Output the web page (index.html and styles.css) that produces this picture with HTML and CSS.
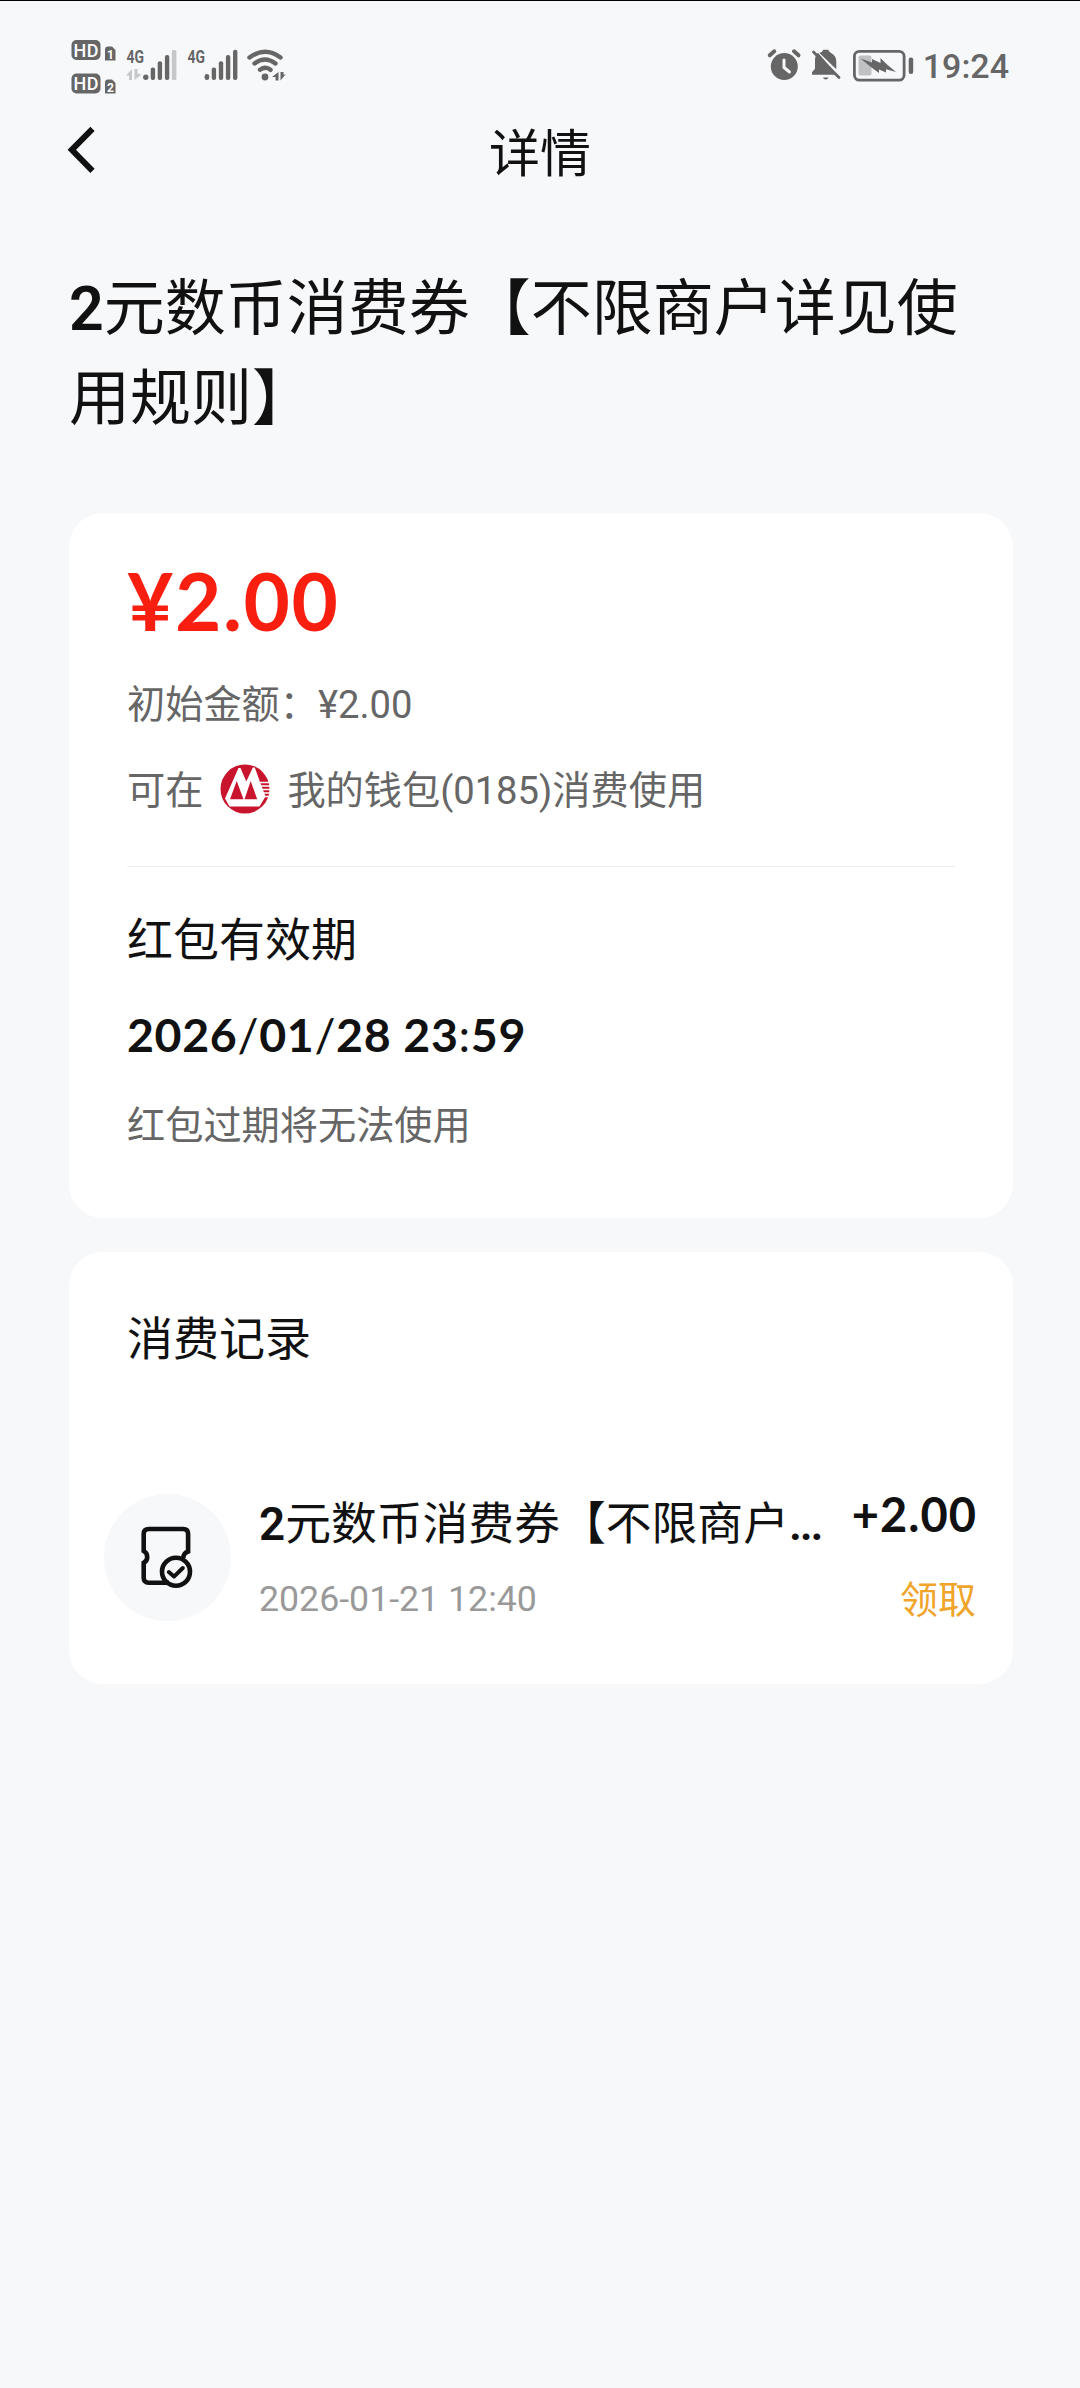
FILE: index.html
```html
<!DOCTYPE html>
<html lang="zh-CN">
<head>
<meta charset="utf-8">
<title>详情</title>
<link rel="stylesheet" href="styles.css">
</head>
<body>
<header class="status">
  <svg class="status-left" width="220" height="64" viewBox="70 34 220 64">
    <g fill="#666">
      <rect x="71.500" y="40" width="29" height="20" rx="5"/>
      <rect x="71.500" y="73.500" width="29" height="20" rx="5"/>
      <path d="M105 49.500q0-3 3-3h4l3.500 3.500v10.500h-10.500z"/>
      <path d="M105 82.500q0-3 3-3h4l3.500 3.500v10.500h-10.500z"/>
    </g>
    <g class="hd" fill="#fff">
      <text x="73.500" y="56.500" textLength="25">HD</text>
      <text x="73.500" y="90" textLength="25">HD</text>
    </g>
    <g class="sim" fill="#fff">
      <text x="107" y="58.500">1</text>
      <text x="107" y="92">2</text>
    </g>
    <g class="net" fill="#666">
      <text x="126.500" y="63" textLength="17.500" lengthAdjust="spacingAndGlyphs">4G</text>
      <text x="187.500" y="63" textLength="17.500" lengthAdjust="spacingAndGlyphs">4G</text>
    </g>
    <g fill="#c6c7c8">
      <path d="M132 69v11h-3v-4.500h-3zM134.500 69h3v4.500l4 1-7 5.500z"/>
      <rect x="171.800" y="50" width="4.600" height="30" rx="1.500"/>
    </g>
    <g fill="#666">
      <circle cx="145.800" cy="77.300" r="2.700"/>
      <rect x="150.700" y="67.500" width="4.400" height="12.500" rx="2"/>
      <rect x="157.700" y="61.300" width="4.400" height="18.700" rx="2"/>
      <rect x="164.900" y="55" width="4.400" height="25" rx="2"/>
      <rect x="204.600" y="74" width="4.600" height="6" rx="2.300"/>
      <rect x="211.700" y="67.500" width="4.400" height="12.500" rx="2"/>
      <rect x="218.800" y="61.300" width="4.400" height="18.700" rx="2"/>
      <rect x="225.900" y="55" width="4.400" height="25" rx="2"/>
      <rect x="233" y="49.800" width="4.400" height="30.200" rx="2"/>
      <circle cx="265" cy="77" r="3.400"/>
      <path d="M278.500 72v8.500h-3v-3.500h-3.500zM280.500 72h3v2.500h2l-5 6z"/>
    </g>
    <g fill="none" stroke="#666" stroke-width="4.400" stroke-linecap="round">
      <path d="M249.500 57.500q15.500-11.500 31 0M254.500 63.500q10.500-8 21 0M260 69.800q5.500-4 10.500 0"/>
    </g>
  </svg>
  <div class="status-right">
    <svg width="148" height="40" viewBox="768 44 148 40">
      <circle cx="786.300" cy="66.500" r="13.500" fill="#666"/>
      <path d="M771.800 55.300l4.500-4M800.500 55.300l-4.500-4" stroke="#666" stroke-width="4" stroke-linecap="round"/>
      <path d="M786 60v7.500l5.500 4.500" fill="none" stroke="#f7f8fa" stroke-width="3" stroke-linecap="round"/>
      <path d="M814 74.800v-2.500l3-3.500v-9q0-4.500 3-7l19 22zM821.500 53q3-1 3.800-3.200h5q.5 2 2.500 3q5.500 3 5.500 9v7.500z" fill="#666"/>
      <path d="M825 77.500h5.500q-.5 2-2.700 2t-2.800-2z" fill="#666"/>
      <path d="M815.500 52l25.500 25.500" stroke="#666" stroke-width="2.800" stroke-linecap="round"/>
      <rect x="856.400" y="51.400" width="49.700" height="28.700" rx="5" fill="none" stroke="#666" stroke-width="2.800"/>
      <rect x="860.500" y="55.500" width="13" height="20" rx="2" fill="#c0c1c2"/>
      <path d="M862.500 58.500l11.500 4v-3.500l8.500 4v-5l6.500 6.500 9 7.500-10-2.700v3.200l-7-3v3.500l-7.500-5.500z" fill="#666"/>
      <rect x="910.700" y="57.500" width="4.500" height="16.500" rx="2" fill="#666"/>
    </svg>
    <span class="time">19:24</span>
  </div>
</header>
<nav class="nav">
  <svg class="back" width="30" height="50" viewBox="66 125 30 50"><path d="M92.500 128.800L71.800 149.800l20.700 21" fill="none" stroke="#111" stroke-width="6"/></svg>
  <h1 class="nav-title">详情</h1>
</nav>
<main>
  <h2 class="title"><b>2</b>元数币消费券【不限商户详见使<br>用规则】</h2>
  <section class="card detail">
    <div class="amount">¥2.00</div>
    <p class="text initial">初始金额：¥2.00</p>
    <p class="text wallet">可在
      <svg class="bank" width="50" height="50" viewBox="0 0 50 50">
        <circle cx="25" cy="25" r="24.500" fill="#c8152d"/>
        <path d="M5 34.500L18.500 4h2L26.300 17.500 32.800 3.500h2L40 18l5.500 14.500-6 10h-30z" fill="#fff"/>
        <path d="M16.700 17l6.800 18.200H10zM30.700 17l6.500 18.200H24.500z" fill="#c8152d"/>
        <path d="M40 18.500h9M41 22h9M42 25.500h8M43 29h6.500M44 32.500h4.500" stroke="#fff" stroke-width="1.500"/>
      </svg>
      <span>我的钱包(0185)消费使用</span></p>
    <hr class="divider">
    <h3 class="heading">红包有效期</h3>
    <div class="expiry">2026<i>/</i>01<i>/</i>28 23<i>:</i>59</div>
    <p class="text note">红包过期将无法使用</p>
  </section>
  <section class="card records">
    <h3 class="heading">消费记录</h3>
    <div class="record">
      <div class="record-icon">
        <svg width="56" height="66" viewBox="0 0 56 66" fill="none" stroke="#111" stroke-width="4.600">
          <path d="M30 57.700H9.700q-5 0-5-5V37.800a6.700 6.700 0 0 0 0-11.800V9q0-5 5-5h34.400q5 0 5 5v17.500q-4.600 1.500-4.800 6.500"/>
          <circle cx="37" cy="46.700" r="14"/>
          <path d="M29.800 47l5.200 4.600 8.800-8.600" stroke-width="4" stroke-linecap="round" stroke-linejoin="round"/>
        </svg>
      </div>
      <div class="record-main">
        <div class="record-title"><b>2</b>元数币消费券【不限商户<b class="dots">...</b></div>
        <div class="record-date">2026-01-21 12:40</div>
      </div>
      <div class="record-side">
        <div class="record-amount">+2.00</div>
        <div class="record-state">领取</div>
      </div>
    </div>
  </section>
</main>
</body>
</html>
```
FILE: styles.css
```css
* {
  box-sizing: border-box;
}

body {
  margin: 0;
  height: 2388px;
  border-top: 1px solid #000;
  background: #f7f8fa;
  color: #111;
  font-family: Roboto, "Noto Sans CJK SC", sans-serif;
  overflow: hidden;
}

h1, h2, h3, p {
  margin: 0;
  font-weight: 400;
}

svg {
  display: block;
  flex: none;
}

.status {
  display: flex;
  justify-content: space-between;
  height: 109px;
  padding: 33px 71px 0 70px;
}

.status-right {
  display: flex;
  align-items: flex-start;
  gap: 9px;
  padding-top: 10px;
}

.time {
  color: #666;
  font-size: 34px;
  font-weight: 500;
  line-height: 44px;
}

.hd {
  font: 500 18px Roboto, sans-serif;
}

.sim {
  font: 700 12px Roboto, sans-serif;
}

.net {
  font: 700 19px Roboto, sans-serif;
}

.nav {
  display: grid;
  grid-template-columns: 30px 1fr 30px;
  align-items: center;
  height: 90px;
  padding: 0 66px;
}

.back {
  margin-top: -10px;
}

.nav-title {
  font-size: 51px;
  line-height: 60px;
  text-align: center;
}

main {
  padding: 64px 67px 0 69px;
}

.title {
  height: 249px;
  font-size: 61px;
  line-height: 90px;
  white-space: nowrap;
}

.title b,
.record-title b {
  font-weight: 600;
}

.record-title .dots {
  letter-spacing: -2.200px;
}

.card {
  border-radius: 34px;
  background: #fff;
}

.detail {
  height: 705px;
  padding: 39px 57px 0 58px;
}

.amount {
  color: #f91f10;
  font-family: Lato, sans-serif;
  font-size: 80px;
  font-weight: 700;
  letter-spacing: 1.600px;
  line-height: 96px;
}

.text {
  color: #666;
  font-size: 38.200px;
  line-height: 56px;
}

.initial {
  margin-top: 29px;
}

.wallet {
  display: flex;
  align-items: center;
  gap: 17px;
  margin-top: 30px;
}

.bank {
  margin: -5px 0 -1px;
}

.divider {
  height: 1px;
  margin: 47px 1px 0 0;
  border: 0;
  background: #ededed;
}

.heading {
  font-size: 46px;
  line-height: 64px;
}

.divider + .heading {
  margin-top: 41px;
}

.expiry {
  margin-top: 30px;
  font-family: Lato, sans-serif;
  font-size: 46.500px;
  font-weight: 700;
  letter-spacing: 0.650px;
  line-height: 64px;
}

.expiry i {
  font-style: normal;
  font-weight: 400;
}

.note {
  margin-top: 32px;
}

.records {
  height: 432px;
  margin-top: 34px;
  padding: 55px 37px 0 35px;
}

.records .heading {
  padding-left: 23px;
}

.record {
  display: flex;
  margin-top: 123px;
}

.record-icon {
  display: grid;
  place-items: center;
  width: 127px;
  height: 127px;
  padding-right: 1px;
  border-radius: 50%;
  background: #f7f8fa;
}

.record-main {
  flex: 1;
  margin: -1px 0 0 28px;
}

.record-title {
  font-size: 45.800px;
  line-height: 64px;
  white-space: nowrap;
}

.record-date {
  margin-top: 17px;
  color: #999;
  font-size: 35.700px;
  line-height: 50px;
}

.record-side {
  margin-top: -12px;
  text-align: right;
}

.record-amount {
  margin-right: -1px;
  font-family: Lato, sans-serif;
  font-size: 47px;
  font-weight: 700;
  letter-spacing: 1px;
  line-height: 64px;
}

.record-state {
  margin-top: 26px;
  color: #f0a52a;
  font-size: 38px;
  line-height: 56px;
}
```
